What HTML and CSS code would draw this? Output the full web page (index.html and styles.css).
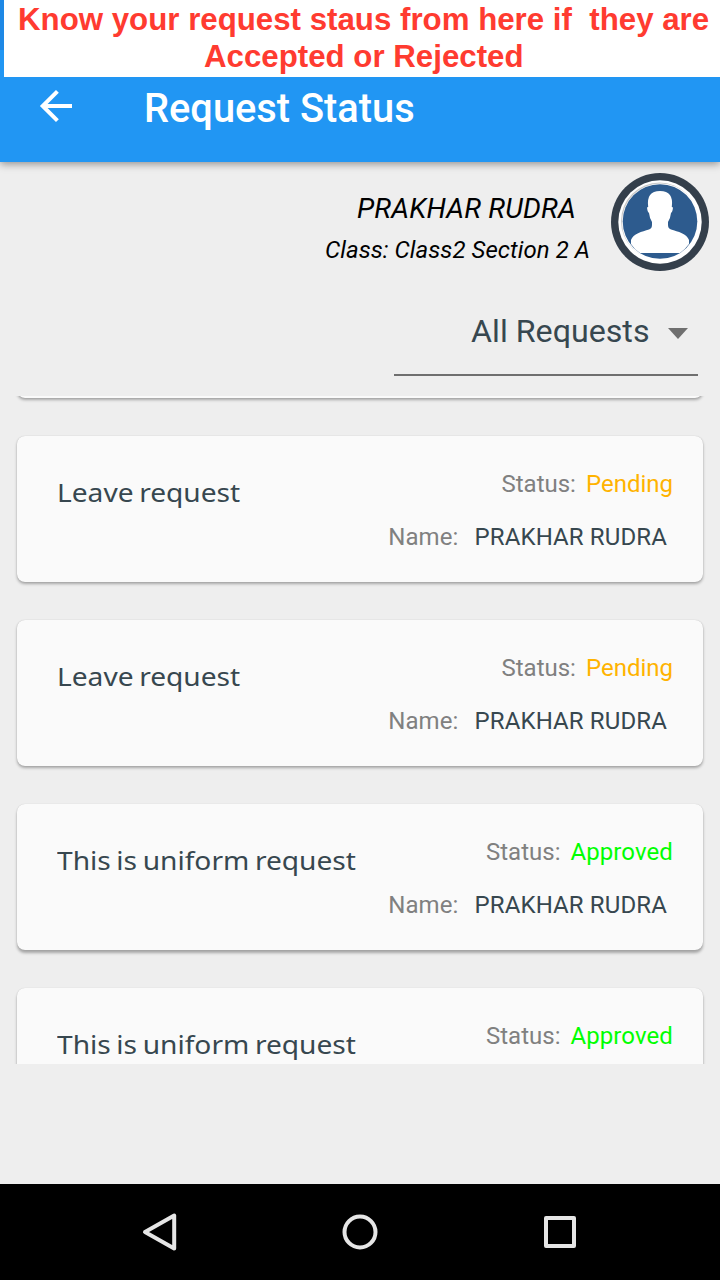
FILE: index.html
```html
<!DOCTYPE html>
<html lang="en">
<head>
<meta charset="utf-8">
<title>Request Status</title>
<link rel="stylesheet" href="styles.css">
</head>
<body>
<div class="screen">
  <header class="top">
    <div class="banner">
      <div class="banner-line banner-first">Know your request staus from here if&nbsp; they are</div>
      <div class="banner-line banner-second">Accepted or Rejected</div>
    </div>
    <div class="toolbar">
      <svg class="back" width="34" height="34" viewBox="0 0 34 34"><path d="M33 17H4M18.400 2.300L3.700 17L18.400 31.700" fill="none" stroke="#fff" stroke-width="4"/></svg>
      <h1 class="title">Request Status</h1>
    </div>
  </header>
  <section class="profile">
    <div class="who">
      <div class="student">PRAKHAR RUDRA</div>
      <div class="class">Class: Class2 Section 2 A</div>
    </div>
    <svg class="avatar" width="98" height="98" viewBox="0 0 98 98">
      <circle cx="49" cy="49" r="49" fill="#343f4b"/>
      <circle cx="49" cy="49" r="41.700" fill="#fff"/>
      <circle cx="48.500" cy="48" r="38.500" fill="#c9c9c9"/>
      <circle cx="49.500" cy="49" r="38.500" fill="#fff"/>
      <circle cx="49" cy="48.500" r="37.300" fill="#2d5b8e"/>
      <path d="M20 71V67C22 61 31 58.500 38 56.500Q41 55.500 41 52V49Q38.500 45 38 40Q36.500 39 36 34.500Q36.500 34 37.200 34Q35 18 49 18Q63 18 60.800 34Q61.500 34 62 34.500Q61.500 39 60 40Q59.500 45 57 49V52Q57 55.500 60 56.500C67 58.500 76 61 78 67V71Q74 76.500 69 80H29Q23 76 20 71Z" fill="#fff"/>
    </svg>
  </section>
  <div class="filter">
    <span class="filter-text">All Requests</span>
    <svg class="caret" width="20" height="11" viewBox="0 0 20 11"><path d="M0 0H20L10 11Z" fill="#6f6f6f"/></svg>
  </div>
  <main class="list">
    <article class="card card-scrolled"></article>
    <article class="card">
      <div class="kind">Leave request</div>
      <div class="info">
        <div class="row status"><span class="label">Status:</span><span class="pending">Pending</span></div>
        <div class="row name"><span class="label">Name:</span><span>PRAKHAR RUDRA</span></div>
      </div>
    </article>
    <article class="card">
      <div class="kind">Leave request</div>
      <div class="info">
        <div class="row status"><span class="label">Status:</span><span class="pending">Pending</span></div>
        <div class="row name"><span class="label">Name:</span><span>PRAKHAR RUDRA</span></div>
      </div>
    </article>
    <article class="card raised">
      <div class="kind">This is uniform request</div>
      <div class="info">
        <div class="row status"><span class="label">Status:</span><span class="approved">Approved</span></div>
        <div class="row name"><span class="label">Name:</span><span>PRAKHAR RUDRA</span></div>
      </div>
    </article>
    <article class="card raised">
      <div class="kind">This is uniform request</div>
      <div class="info">
        <div class="row status"><span class="label">Status:</span><span class="approved">Approved</span></div>
      </div>
    </article>
  </main>
  <nav class="navbar">
    <svg width="40" height="40" viewBox="0 0 40 40"><path d="M34.200 3.500V36.500L5 20Z"/></svg>
    <svg width="40" height="40" viewBox="0 0 40 40"><circle cx="20" cy="20" r="15.500"/></svg>
    <svg width="40" height="40" viewBox="0 0 40 40"><rect x="6" y="6" width="28" height="28"/></svg>
  </nav>
</div>
</body>
</html>
```
FILE: styles.css
```css
* { box-sizing: border-box; }
body { margin: 0; background: #eee; font-family: Roboto, sans-serif; }
.screen {
  width: 720px;
  height: 1280px;
  display: flex;
  flex-direction: column;
  overflow: hidden;
  background: #eee;
  white-space: nowrap;
}
.top {
  height: 162px;
  padding-left: 4px;
  background: linear-gradient(#1e88e5 50px, #2196f3 50px);
  box-shadow: 0 2px 8px rgba(0, 0, 0, .4);
}
.banner {
  height: 77px;
  padding-top: 1px;
  background: #fff;
  color: #ff3b30;
  font: bold 31.25px/37px "Liberation Sans", Arial, sans-serif;
}
.banner-first { padding-left: 14px; }
.banner-second { padding-left: 200px; }
.toolbar { display: flex; padding-left: 35px; }
.back { margin-top: 12px; }
.title {
  margin: 8px 0 0 71px;
  font-size: 39.8px;
  font-weight: 500;
  line-height: 48px;
  color: #fff;
}
.profile {
  display: flex;
  justify-content: flex-end;
  height: 140px;
  padding: 11px 11px 0 0;
}
.who { text-align: right; font-style: italic; color: #000; margin-right: 21px; }
.student { margin: 20px 14px 0 0; font-size: 28px; line-height: 32px; letter-spacing: .22px; }
.class { margin-top: 11px; font-size: 24px; line-height: 28px; letter-spacing: .06px; }
.filter {
  width: 304px;
  height: 74px;
  margin-left: 394px;
  padding: 9px 10px 0 0;
  display: flex;
  justify-content: flex-end;
  gap: 18.5px;
  border-bottom: 2px solid #6f6f6f;
  color: #37474f;
}
.filter-text { font-size: 32.2px; line-height: 40px; }
.caret { margin-top: 17px; }
.list {
  margin-top: 20px;
  height: 668px;
  padding: 0 17px;
  display: flex;
  flex-direction: column;
  gap: 38px;
  overflow: hidden;
}
.card {
  flex: none;
  height: 146px;
  display: flex;
  justify-content: space-between;
  padding: 34px 30px 0 40px;
  border-radius: 8px;
  background: #fafafa;
  box-shadow: 0 2px 3px rgba(0, 0, 0, .3), 0 0 1px rgba(0, 0, 0, .2);
  color: #37474f;
}
.raised { box-shadow: 0 3px 3px rgba(0, 0, 0, .3), 0 0 1px rgba(0, 0, 0, .2); }
.card-scrolled { margin-top: -144px; }
.kind {
  margin-top: 4px;
  font: 26px/36px "Noto Sans", sans-serif;
  word-spacing: -1.6px;
  transform: scaleX(1.082);
  transform-origin: left;
}
.info { font-size: 24px; line-height: 28px; }
.row { display: flex; justify-content: flex-end; }
.status { gap: 10px; }
.name { gap: 16px; margin: 25px 6px 0 0; letter-spacing: .12px; }
.label { color: #808080; }
.pending { color: #ffb300; }
.approved { color: #0f0; letter-spacing: .1px; }
.navbar {
  height: 96px;
  margin-top: auto;
  padding: 0 140px;
  display: flex;
  align-items: center;
  justify-content: space-between;
  background: #000;
}
.navbar svg { fill: none; stroke: #e6e6e6; stroke-width: 4; stroke-linejoin: round; }
```
